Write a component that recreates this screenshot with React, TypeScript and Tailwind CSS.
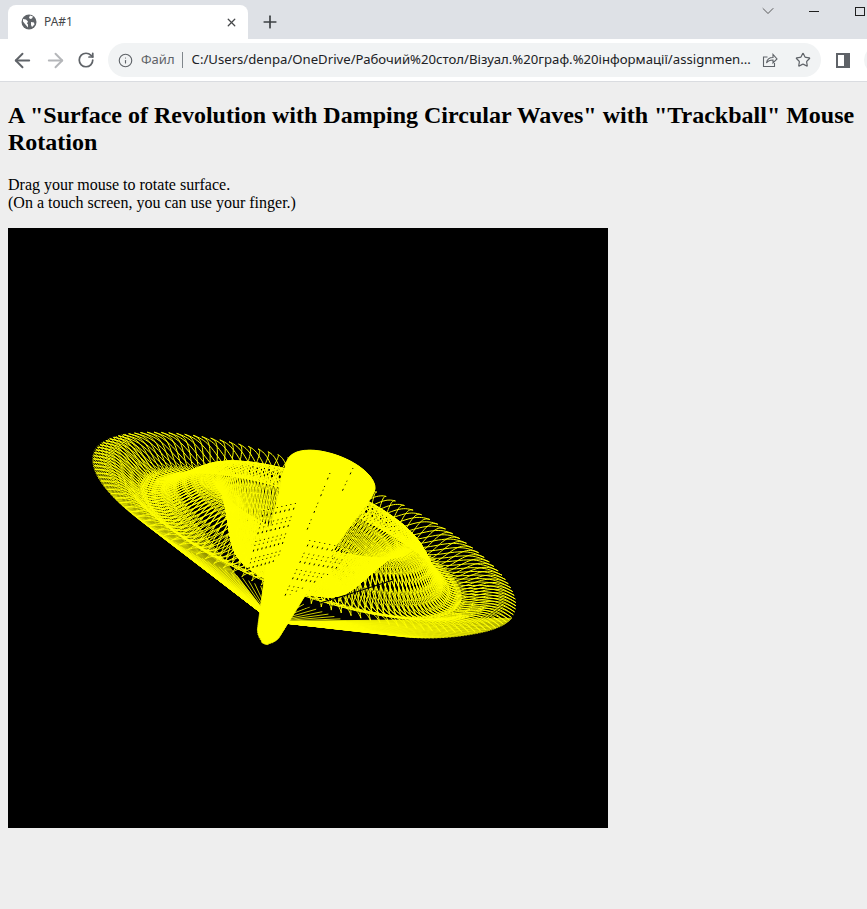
import React, { useMemo } from 'react';
import { ArrowLeft, ArrowRight, RotateCw, Plus, X, Star, Info, ChevronDown } from 'lucide-react';

const R = 225;
const LOBES = 132;
const R0 = 20;

// projected axes of the surface inside the 600x600 canvas
const project = (r: number, a: number, h: number, dx = 0) => {
  const c = Math.cos(a) * (r / R);
  const s = Math.sin(a) * (r / R);
  const x = 296.5 + c * 211 + s * 23.5 + h * 0.33 + dx;
  const y = 304.5 + c * 80 - s * 61 - h * 0.92;
  return `${x.toFixed(1)} ${y.toFixed(1)}`;
};

const wave = (r: number) => 80 * Math.exp(-r / 90) * Math.cos((r * 2 * Math.PI) / 112) * (1 - Math.pow(r / R, 8));

const buildLobes = (rim: number, twist: number, phase: number) => {
  const parts: string[] = [];
  const step = (Math.PI * 2) / LOBES;
  for (let i = 0; i < LOBES; i++) {
    const a0 = (i + phase) * step;
    const pts: string[] = [];
    // in from the inner ring to the rim on one side, back on the other
    for (let u = 1; u >= -1; u -= 0.015) {
      const t = Math.abs(u);
      const r = rim - (rim - R0) * t;
      const off = Math.sign(u) * twist * Math.pow(t, 1.7);
      pts.push(project(r, a0 + off, wave(r)));
    }
    parts.push('M' + pts.join('L'));
  }
  return parts.join('');
};

// straight lines from the lower part of the rim down to the apex
const buildCone = () => {
  const parts: string[] = [];
  let deg = -206;
  while (deg <= -5) {
    const a = (deg * Math.PI) / 180;
    const drop = -9 * Math.exp(-Math.pow((deg + 58) / 22, 2));
    parts.push(`M${project(R, a, drop)}L${project(0, 0, -97)}`);
    // the front sector is packed a little tighter
    deg += deg > -60 ? 1.2 : 1.7;
  }
  return parts.join('');
};

const spikeRadius = (h: number) => {
  const top = Math.max(0, (h - 62) / 16);
  const tip = Math.max(0, (-108 - h) / 12);
  return (10 + Math.min(1, (h + 118) / 175) * 36) * Math.sqrt(1 - Math.min(1, top * top)) * Math.sqrt(1 - Math.min(0.85, tip * tip));
};

const buildSpike = () => {
  const parts: string[] = [];
  for (let h = -120; h <= 78; h += 2) {
    const r = spikeRadius(h);
    const pts: string[] = [];
    const dx = Math.max(0, h) * 0.1;
    for (let i = 0; i < 48; i++) pts.push(project(r, (i * Math.PI) / 24, h, dx));
    parts.push('M' + pts.join('L') + 'Z');
  }
  return parts.join('');
};

// holes where the mesh shows through the column, in canvas coordinates
const buildSpecks = () => {
  const parts: string[] = [];
  for (let i = 0; i < 9; i++) {
    const x = 302 + i * 5;
    parts.push(`M${x} ${312 + i}L${x - 26 + i} ${370 - i * 3}`);
  }
  for (let i = 0; i < 8; i++) {
    const x = 256 + i * 4.5;
    parts.push(`M${x} ${282 - i}L${x - 18} ${352 - i * 3}`);
  }
  parts.push('M322 245L299 302');
  parts.push('M345 240L332 268');
  return parts.join('');
};

const Surface = () => {
  const lobes = useMemo(() => buildLobes(R, 0.85, 0), []);
  const inner = useMemo(() => buildLobes(R * 0.76, 0.55, 0.5), []);
  const cone = useMemo(buildCone, []);
  const spikeMesh = useMemo(buildSpike, []);
  const specks = useMemo(buildSpecks, []);
  return (
    <svg width="600" height="600" viewBox="0 0 600 600" className="block bg-black">
      <path d={lobes} fill="none" stroke="#ffff00" strokeWidth="1" />
      <path d={inner} fill="none" stroke="#ffff00" strokeWidth="1" />
      <path d={cone} fill="none" stroke="#ffff00" strokeWidth="0.8" />
      <path d={spikeMesh} fill="#ffff00" stroke="#ffff00" strokeWidth="1" />
      <path d={specks} fill="none" stroke="#000000" strokeWidth="1" strokeDasharray="1 4 2 7 1 3" />
      <path d="M289 382L345 365L385 352" fill="none" stroke="#000000" strokeWidth="1.2" />
    </svg>
  );
};

const Globe = () => (
  <svg width="16" height="16" viewBox="0 0 16 16">
    <circle cx="8" cy="8" r="7.500" fill="#5f6368" />
    <path d="M2 5l3 .5 2 2-1 2 1 1v3L4 10 2 7.500zM9 1.500l3 1-1 2-2 .5-1-1.500zM10 8l3 .5 .5 2-2.500 2.500-1-2z" fill="#ffffff" />
  </svg>
);

const Share = () => (
  <svg width="16" height="16" viewBox="0 0 16 16" fill="none" stroke="#5f6368" strokeWidth="1.1">
    <path d="M5.500 5H1.500v9.500h11V11" />
    <path d="M4.500 11c.5-3.500 3-5.500 6.500-5.500V2.500L15 7l-4 4V8c-2.500 0-5 .8-6.500 3z" />
  </svg>
);

const App = () => {
  return (
    <div
      className="flex h-[909px] flex-col overflow-hidden bg-[#eeeeee] text-black"
      style={{ fontFamily: '"Liberation Serif", serif' }}
    >
      <div className="flex flex-col font-['Noto_Sans',sans-serif]">
        <div className="flex h-[39px] bg-[#dee1e6]">
          <div className="ml-2 mt-[5px] flex h-[34px] w-[240px] items-center rounded-t-lg bg-white pl-[13px] pr-[10px]">
            <Globe />
            <span className="ml-[7px] text-xs text-[#45474a]">PA#1</span>
            <X size={13} strokeWidth={2.4} className="ml-auto text-[#45474a]" />
          </div>
          <Plus size={20} strokeWidth={2} className="ml-3 mt-3 text-[#3c4043]" />
          <div className="ml-auto mr-[2px] flex h-[22px] items-center text-[#3c3c3c]">
            <ChevronDown size={20} strokeWidth={1} />
            <div className="ml-[31px] h-px w-[10px] bg-[#1f1f1f]" />
            <div className="ml-[36px] h-[9px] w-[10px] border border-[#1f1f1f]" />
          </div>
        </div>
        <div className="flex h-[43px] items-center border-b border-[#dadce0] bg-white pl-[11px]">
          <ArrowLeft size={23} strokeWidth={2} className="shrink-0 text-[#5f6368]" />
          <ArrowRight size={23} strokeWidth={2} className="ml-[10px] shrink-0 text-[#b4b6b9]" />
          <RotateCw size={18} strokeWidth={2.3} className="ml-[10px] shrink-0 text-[#5f6368]" />
          <div className="ml-[13px] flex h-[34px] w-[713px] shrink-0 items-center rounded-full bg-[#f1f3f4] pl-[10px] text-[13px]">
            <Info size={15} strokeWidth={1.8} className="text-[#5f6368]" />
            <span className="ml-[8px] text-[#5f6368]">Файл</span>
            <div className="ml-[7px] h-4 w-px bg-[#80868b]" />
            <span className="ml-[9px] whitespace-nowrap text-[13.17px] text-[#202124]">
              C:/Users/denpa/OneDrive/Рабочий%20стол/Візуал.%20граф.%20інформації/assignmen...
            </span>
            <div className="ml-auto mr-[10px] flex items-center gap-[17px]">
              <Share />
              <Star size={16} strokeWidth={1.8} className="text-[#5f6368]" />
            </div>
          </div>
          <div className="ml-[15px] flex h-[15px] w-[14px] shrink-0 justify-end border-2 border-[#5f6368]">
            <div className="h-full w-[4px] bg-[#5f6368]" />
          </div>
          <div className="ml-[14px] h-[28px] w-[28px] shrink-0 rounded-full bg-[#f1f3f4]" />
        </div>
      </div>

      <div className="px-2">
        <h2 className="my-5 text-2xl font-bold leading-[27px]">
          A "Surface of Revolution with Damping Circular Waves" with "Trackball" Mouse Rotation
        </h2>
        <p className="my-4 text-base leading-[18px]">
          Drag your mouse to rotate surface.
          <br />
          (On a touch screen, you can use your finger.)
        </p>
        <Surface />
      </div>
    </div>
  );
};

export default App;
